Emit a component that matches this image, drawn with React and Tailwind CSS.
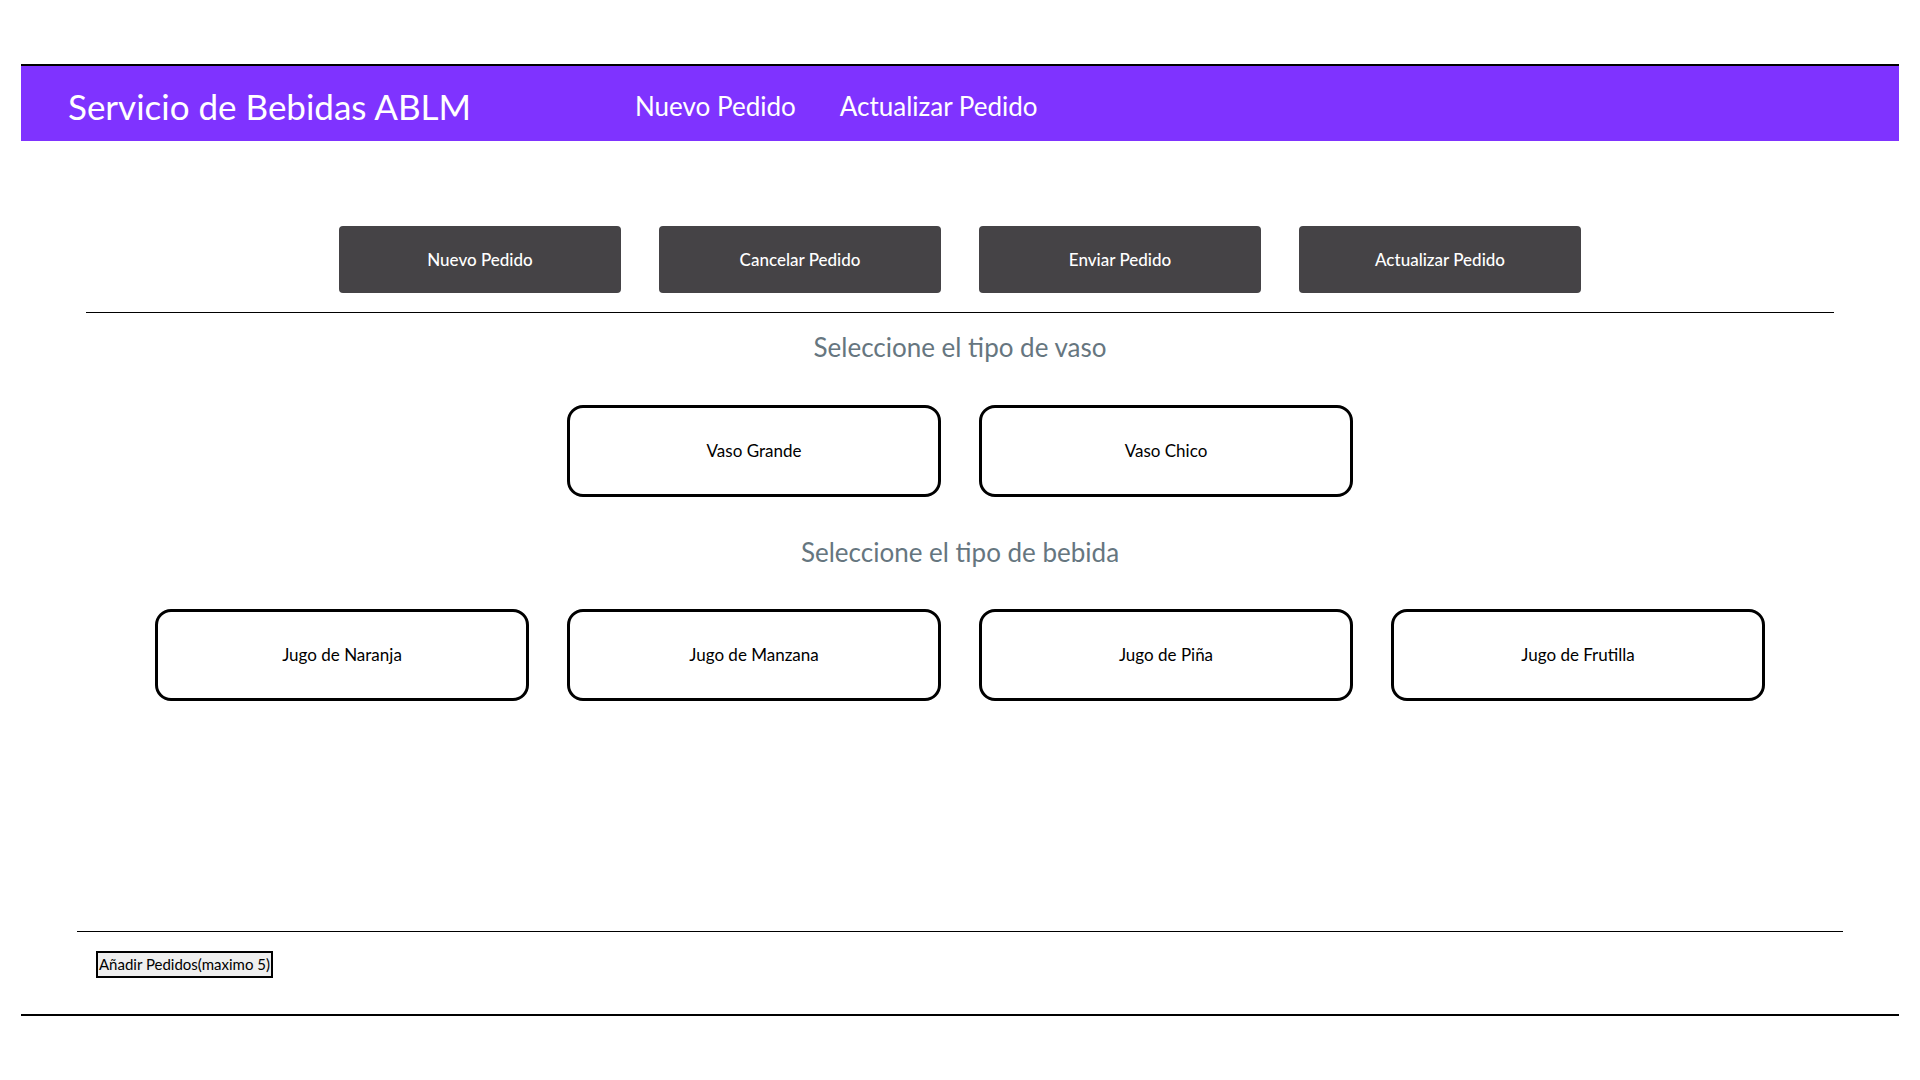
import React, { useState } from 'react';

const accionesPedido = ['Nuevo Pedido', 'Cancelar Pedido', 'Enviar Pedido', 'Actualizar Pedido'];
const tiposVaso = ['Vaso Grande', 'Vaso Chico'];
const tiposBebida = ['Jugo de Naranja', 'Jugo de Manzana', 'Jugo de Piña', 'Jugo de Frutilla'];

const OpcionBoton = ({ label, activo, onClick }) => (
  <button
    onClick={onClick}
    className={`w-[374px] h-[92px] rounded-[16px] border-[3px] border-black text-[17px] text-black ${
      activo ? 'bg-gray-100' : 'bg-white'
    }`}
  >
    {label}
  </button>
);

const App = () => {
  const [vaso, setVaso] = useState(null);
  const [bebida, setBebida] = useState(null);

  return (
    <div className="min-h-screen bg-white pt-[64px] px-[21px] font-['Lato',sans-serif]">
      {/* Barra superior */}
      <header className="h-[77px] pt-[5px] border-t-2 border-black bg-[#7f33ff] flex items-center">
        <h1 className="pl-[47px] w-[614px] text-[35px] text-white leading-none">
          Servicio de Bebidas ABLM
        </h1>
        <nav className="flex items-center gap-[44px] text-[26px] text-white">
          <a href="#">Nuevo Pedido</a>
          <a href="#">Actualizar Pedido</a>
        </nav>
      </header>

      {/* Acciones */}
      <div className="mt-[85px] flex justify-center gap-[38px]">
        {accionesPedido.map((accion) => (
          <button
            key={accion}
            className="w-[282px] h-[67px] rounded-[4px] bg-[#454346] text-white text-[17px] font-medium"
          >
            {accion}
          </button>
        ))}
      </div>

      <hr className="mt-[19px] mx-[65px] border-t border-black" />

      {/* Tipo de vaso */}
      <h2 className="mt-[15px] text-center text-[26px] text-[#66767f]">Seleccione el tipo de vaso</h2>
      <div className="mt-[38px] flex justify-center gap-[38px]">
        {tiposVaso.map((t) => (
          <OpcionBoton key={t} label={t} activo={vaso === t} onClick={() => setVaso(t)} />
        ))}
      </div>

      {/* Tipo de bebida */}
      <h2 className="mt-[36px] text-center text-[26px] text-[#66767f]">Seleccione el tipo de bebida</h2>
      <div className="mt-[37px] flex justify-center gap-[38px]">
        {tiposBebida.map((t) => (
          <OpcionBoton key={t} label={t} activo={bebida === t} onClick={() => setBebida(t)} />
        ))}
      </div>

      {/* Pedidos */}
      <div className="mt-[230px] mx-[56px] border-t border-black pt-[19px] pb-[36px] pl-[19px]">
        <button className="h-[27px] px-[1px] border-2 border-black bg-[#efefef] text-[15px] leading-none text-black">
          Añadir Pedidos(maximo 5)
        </button>
      </div>
      <div className="border-t-2 border-black" />
    </div>
  );
};

export default App;
